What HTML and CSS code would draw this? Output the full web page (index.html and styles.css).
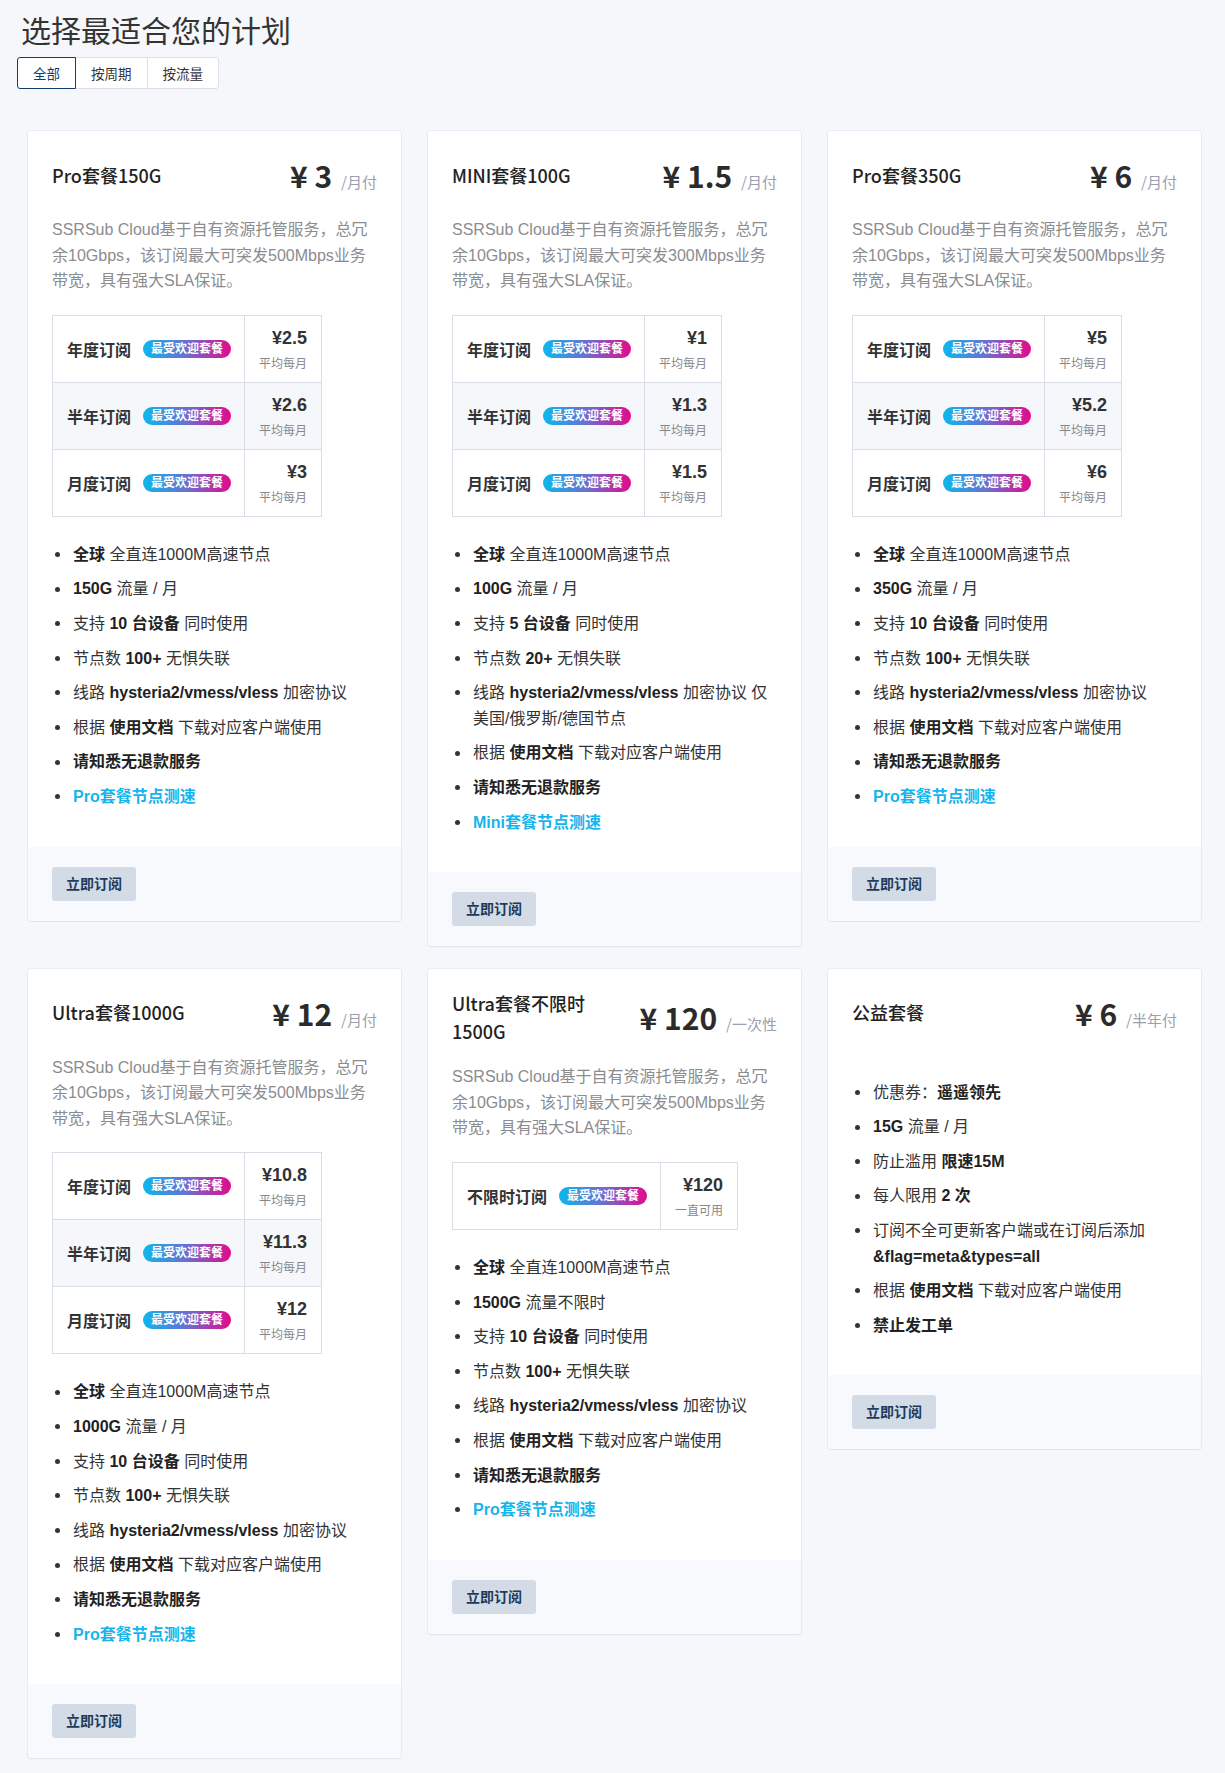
FILE: index.html
```html
<!DOCTYPE html>
<html lang="zh-CN">
<head>
<meta charset="utf-8">
<title>选择最适合您的计划</title>
<link rel="stylesheet" href="styles.css">
</head>
<body>
<div class="page">
  <h1 class="page-title">选择最适合您的计划</h1>
  <div class="tabs">
    <button class="tab tab-active">全部</button>
    <button class="tab">按周期</button>
    <button class="tab">按流量</button>
  </div>

  <div class="plans">
    <!-- Card 1 -->
    <div class="plan">
      <div class="plan-body">
        <div class="plan-head">
          <div class="plan-name">Pro套餐150G</div>
          <div class="plan-price">¥ 3<span class="plan-unit">/月付</span></div>
        </div>
        <p class="plan-desc">SSRSub Cloud基于自有资源托管服务，总冗余10Gbps，该订阅最大可突发500Mbps业务带宽，具有强大SLA保证。</p>
        <table class="period-table">
          <tr><td class="period-name"><b>年度订阅</b><span class="badge">最受欢迎套餐</span></td><td class="period-price"><div class="pp-amount">¥2.5</div><div class="pp-sub">平均每月</div></td></tr>
          <tr><td class="period-name"><b>半年订阅</b><span class="badge">最受欢迎套餐</span></td><td class="period-price"><div class="pp-amount">¥2.6</div><div class="pp-sub">平均每月</div></td></tr>
          <tr><td class="period-name"><b>月度订阅</b><span class="badge">最受欢迎套餐</span></td><td class="period-price"><div class="pp-amount">¥3</div><div class="pp-sub">平均每月</div></td></tr>
        </table>
        <ul class="features">
          <li><span><b>全球</b> 全直连1000M高速节点</span></li>
          <li><span><b>150G</b> 流量 / 月</span></li>
          <li><span>支持 <b>10 台设备</b> 同时使用</span></li>
          <li><span>节点数 <b>100+</b> 无惧失联</span></li>
          <li><span>线路 <b>hysteria2/vmess/vless</b> 加密协议</span></li>
          <li><span>根据 <b>使用文档</b> 下载对应客户端使用</span></li>
          <li><span><b>请知悉无退款服务</b></span></li>
          <li><span><a class="feature-link" href="#">Pro套餐节点测速</a></span></li>
        </ul>
      </div>
      <div class="plan-foot"><button class="btn">立即订阅</button></div>
    </div>

    <!-- Card 2 -->
    <div class="plan">
      <div class="plan-body">
        <div class="plan-head">
          <div class="plan-name">MINI套餐100G</div>
          <div class="plan-price">¥ 1.5<span class="plan-unit">/月付</span></div>
        </div>
        <p class="plan-desc">SSRSub Cloud基于自有资源托管服务，总冗余10Gbps，该订阅最大可突发300Mbps业务带宽，具有强大SLA保证。</p>
        <table class="period-table">
          <tr><td class="period-name"><b>年度订阅</b><span class="badge">最受欢迎套餐</span></td><td class="period-price"><div class="pp-amount">¥1</div><div class="pp-sub">平均每月</div></td></tr>
          <tr><td class="period-name"><b>半年订阅</b><span class="badge">最受欢迎套餐</span></td><td class="period-price"><div class="pp-amount">¥1.3</div><div class="pp-sub">平均每月</div></td></tr>
          <tr><td class="period-name"><b>月度订阅</b><span class="badge">最受欢迎套餐</span></td><td class="period-price"><div class="pp-amount">¥1.5</div><div class="pp-sub">平均每月</div></td></tr>
        </table>
        <ul class="features">
          <li><span><b>全球</b> 全直连1000M高速节点</span></li>
          <li><span><b>100G</b> 流量 / 月</span></li>
          <li><span>支持 <b>5 台设备</b> 同时使用</span></li>
          <li><span>节点数 <b>20+</b> 无惧失联</span></li>
          <li><span>线路 <b>hysteria2/vmess/vless</b> 加密协议 仅美国/俄罗斯/德国节点</span></li>
          <li><span>根据 <b>使用文档</b> 下载对应客户端使用</span></li>
          <li><span><b>请知悉无退款服务</b></span></li>
          <li><span><a class="feature-link" href="#">Mini套餐节点测速</a></span></li>
        </ul>
      </div>
      <div class="plan-foot"><button class="btn">立即订阅</button></div>
    </div>

    <!-- Card 3 -->
    <div class="plan">
      <div class="plan-body">
        <div class="plan-head">
          <div class="plan-name">Pro套餐350G</div>
          <div class="plan-price">¥ 6<span class="plan-unit">/月付</span></div>
        </div>
        <p class="plan-desc">SSRSub Cloud基于自有资源托管服务，总冗余10Gbps，该订阅最大可突发500Mbps业务带宽，具有强大SLA保证。</p>
        <table class="period-table">
          <tr><td class="period-name"><b>年度订阅</b><span class="badge">最受欢迎套餐</span></td><td class="period-price"><div class="pp-amount">¥5</div><div class="pp-sub">平均每月</div></td></tr>
          <tr><td class="period-name"><b>半年订阅</b><span class="badge">最受欢迎套餐</span></td><td class="period-price"><div class="pp-amount">¥5.2</div><div class="pp-sub">平均每月</div></td></tr>
          <tr><td class="period-name"><b>月度订阅</b><span class="badge">最受欢迎套餐</span></td><td class="period-price"><div class="pp-amount">¥6</div><div class="pp-sub">平均每月</div></td></tr>
        </table>
        <ul class="features">
          <li><span><b>全球</b> 全直连1000M高速节点</span></li>
          <li><span><b>350G</b> 流量 / 月</span></li>
          <li><span>支持 <b>10 台设备</b> 同时使用</span></li>
          <li><span>节点数 <b>100+</b> 无惧失联</span></li>
          <li><span>线路 <b>hysteria2/vmess/vless</b> 加密协议</span></li>
          <li><span>根据 <b>使用文档</b> 下载对应客户端使用</span></li>
          <li><span><b>请知悉无退款服务</b></span></li>
          <li><span><a class="feature-link" href="#">Pro套餐节点测速</a></span></li>
        </ul>
      </div>
      <div class="plan-foot"><button class="btn">立即订阅</button></div>
    </div>

    <!-- Card 4 -->
    <div class="plan">
      <div class="plan-body">
        <div class="plan-head">
          <div class="plan-name">Ultra套餐1000G</div>
          <div class="plan-price">¥ 12<span class="plan-unit">/月付</span></div>
        </div>
        <p class="plan-desc">SSRSub Cloud基于自有资源托管服务，总冗余10Gbps，该订阅最大可突发500Mbps业务带宽，具有强大SLA保证。</p>
        <table class="period-table">
          <tr><td class="period-name"><b>年度订阅</b><span class="badge">最受欢迎套餐</span></td><td class="period-price"><div class="pp-amount">¥10.8</div><div class="pp-sub">平均每月</div></td></tr>
          <tr><td class="period-name"><b>半年订阅</b><span class="badge">最受欢迎套餐</span></td><td class="period-price"><div class="pp-amount">¥11.3</div><div class="pp-sub">平均每月</div></td></tr>
          <tr><td class="period-name"><b>月度订阅</b><span class="badge">最受欢迎套餐</span></td><td class="period-price"><div class="pp-amount">¥12</div><div class="pp-sub">平均每月</div></td></tr>
        </table>
        <ul class="features">
          <li><span><b>全球</b> 全直连1000M高速节点</span></li>
          <li><span><b>1000G</b> 流量 / 月</span></li>
          <li><span>支持 <b>10 台设备</b> 同时使用</span></li>
          <li><span>节点数 <b>100+</b> 无惧失联</span></li>
          <li><span>线路 <b>hysteria2/vmess/vless</b> 加密协议</span></li>
          <li><span>根据 <b>使用文档</b> 下载对应客户端使用</span></li>
          <li><span><b>请知悉无退款服务</b></span></li>
          <li><span><a class="feature-link" href="#">Pro套餐节点测速</a></span></li>
        </ul>
      </div>
      <div class="plan-foot"><button class="btn">立即订阅</button></div>
    </div>

    <!-- Card 5 -->
    <div class="plan">
      <div class="plan-body">
        <div class="plan-head">
          <div class="plan-name">Ultra套餐不限时1500G</div>
          <div class="plan-price">¥ 120<span class="plan-unit">/一次性</span></div>
        </div>
        <p class="plan-desc">SSRSub Cloud基于自有资源托管服务，总冗余10Gbps，该订阅最大可突发500Mbps业务带宽，具有强大SLA保证。</p>
        <table class="period-table">
          <tr><td class="period-name"><b>不限时订阅</b><span class="badge">最受欢迎套餐</span></td><td class="period-price"><div class="pp-amount">¥120</div><div class="pp-sub">一直可用</div></td></tr>
        </table>
        <ul class="features">
          <li><span><b>全球</b> 全直连1000M高速节点</span></li>
          <li><span><b>1500G</b> 流量不限时</span></li>
          <li><span>支持 <b>10 台设备</b> 同时使用</span></li>
          <li><span>节点数 <b>100+</b> 无惧失联</span></li>
          <li><span>线路 <b>hysteria2/vmess/vless</b> 加密协议</span></li>
          <li><span>根据 <b>使用文档</b> 下载对应客户端使用</span></li>
          <li><span><b>请知悉无退款服务</b></span></li>
          <li><span><a class="feature-link" href="#">Pro套餐节点测速</a></span></li>
        </ul>
      </div>
      <div class="plan-foot"><button class="btn">立即订阅</button></div>
    </div>

    <!-- Card 6 -->
    <div class="plan">
      <div class="plan-body">
        <div class="plan-head">
          <div class="plan-name">公益套餐</div>
          <div class="plan-price">¥ 6<span class="plan-unit">/半年付</span></div>
        </div>
        <p class="plan-desc plan-desc-empty"></p>
        <ul class="features">
          <li><span>优惠券：<b>遥遥领先</b></span></li>
          <li><span><b>15G</b> 流量 / 月</span></li>
          <li><span>防止滥用 <b>限速15M</b></span></li>
          <li><span>每人限用 <b>2 次</b></span></li>
          <li><span>订阅不全可更新客户端或在订阅后添加<b>&amp;flag=meta&amp;types=all</b></span></li>
          <li><span>根据 <b>使用文档</b> 下载对应客户端使用</span></li>
          <li><span><b>禁止发工单</b></span></li>
        </ul>
      </div>
      <div class="plan-foot"><button class="btn">立即订阅</button></div>
    </div>
  </div>
</div>
</body>
</html>
```

FILE: styles.css
```css
* { box-sizing: border-box; }

html, body {
  margin: 0;
  padding: 0;
}

body {
  background: #f5f7fb;
  color: #333;
  font-family: "Liberation Sans", "Noto Sans CJK SC", sans-serif;
  font-size: 16px;
}

.page {
  padding: 11px 17px 15px;
}

.page-title {
  margin: 0 0 10px 4px;
  font-family: "Noto Sans CJK SC", sans-serif;
  font-size: 30px;
  line-height: 36px;
  font-weight: 400;
  color: #333;
}

.tabs {
  display: flex;
}

.tab {
  font-family: "Noto Sans CJK SC", sans-serif;
  font-size: 13.5px;
  line-height: 30px;
  height: 32px;
  padding: 0 15px;
  margin: 0 0 0 -1px;
  background: #fff;
  color: #333;
  border: 1px solid #dcdfe6;
  border-radius: 0;
  cursor: pointer;
}

.tab:first-child {
  margin-left: 0;
  border-radius: 3px 0 0 3px;
}

.tab:last-child {
  border-radius: 0 3px 3px 0;
}

.tab-active {
  position: relative;
  z-index: 1;
  border-color: #123f6e;
  color: #123f6e;
}

.plans {
  display: grid;
  grid-template-columns: repeat(3, 373px);
  column-gap: 27px;
  row-gap: 22.5px;
  align-items: start;
  margin: 42px 0 0 11px;
}

.plan {
  background: #fff;
  border-radius: 3px;
  box-shadow: 0 0 0 1px rgba(0, 40, 100, 0.05), 0 1px 2px rgba(0, 0, 0, 0.04);
  overflow: hidden;
}

.plan-body {
  padding: 20px 24px 28px;
}

.plan-head {
  display: flex;
  align-items: center;
  justify-content: space-between;
  gap: 16px;
  margin-bottom: 18px;
}

.plan-name {
  font-family: "Noto Sans CJK SC", sans-serif;
  font-size: 18px;
  line-height: 28.8px;
  font-weight: 500;
  color: #222;
}

.plan-price {
  flex: none;
  white-space: nowrap;
  font-family: "Noto Sans CJK SC", sans-serif;
  font-size: 30px;
  line-height: 48px;
  height: 48px;
  font-weight: 700;
  color: #2b2b2b;
}

.plan-unit {
  margin-left: 9px;
  font-size: 15px;
  line-height: 1;
  font-weight: 400;
  color: #9aa0ac;
}

.plan-desc {
  margin: 0 0 21px;
  font-size: 16px;
  line-height: 25.6px;
  color: #8a8c90;
}

.plan-desc-empty {
  margin-bottom: 43px;
}

.period-table {
  border-collapse: collapse;
  border: 1px solid #d9dde5;
  margin-bottom: 25px;
}

.period-table tr:nth-child(even) {
  background: #f5f7fa;
}

.period-table td {
  border: 1px solid #d9dde5;
}

.period-name {
  padding: 0 13px 0 14px;
  white-space: nowrap;
  vertical-align: middle;
  font-size: 16px;
  color: #333;
}

.period-name b {
  font-weight: 700;
  vertical-align: middle;
}

.badge {
  display: inline-block;
  vertical-align: middle;
  margin-left: 12px;
  padding: 0 8px;
  height: 18px;
  line-height: 18px;
  border-radius: 9px;
  font-size: 12px;
  font-weight: 700;
  color: #fff;
  background: linear-gradient(90deg, #0db7ec 0%, #6b6fd0 50%, #e30a8b 100%);
}

.period-price {
  padding: 10px 14px 9px;
  text-align: right;
  white-space: nowrap;
}

.pp-amount {
  font-size: 18px;
  line-height: 24px;
  font-weight: 700;
  color: #333;
  margin-bottom: 5px;
}

.pp-sub {
  font-size: 12px;
  line-height: 18px;
  color: #888;
}

.features {
  list-style: none;
  margin: 0;
  padding: 0;
}

.features li {
  display: flex;
  align-items: flex-start;
  font-size: 16px;
  line-height: 25.6px;
  margin-bottom: 9px;
  color: #333;
}

.features li::before {
  content: "";
  flex: none;
  width: 5px;
  height: 5px;
  border-radius: 50%;
  background: #333;
  margin: 10.3px 13.5px 0 2.5px;
}

.features b {
  font-weight: 700;
  color: #222;
}

.feature-link {
  color: #16b4ec;
  font-weight: 700;
  text-decoration: none;
}

.plan-foot {
  background: #f8f9fc;
  padding: 20px 24px;
}

.btn {
  display: block;
  height: 34px;
  padding: 0 14px;
  border: none;
  border-radius: 3px;
  background: #d3dce6;
  color: #1d3b5c;
  font-family: "Liberation Sans", "Noto Sans CJK SC", sans-serif;
  font-size: 14px;
  font-weight: 700;
  line-height: 34px;
  cursor: pointer;
}
```
